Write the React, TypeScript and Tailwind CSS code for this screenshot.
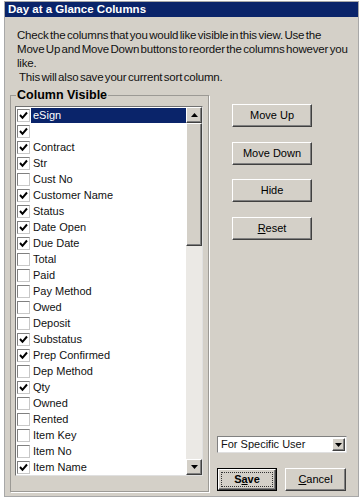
import React from "react";

const items: [string, boolean][] = [
  ["eSign", true],
  ["", true],
  ["Contract", true],
  ["Str", true],
  ["Cust No", false],
  ["Customer Name", true],
  ["Status", true],
  ["Date Open", true],
  ["Due Date", true],
  ["Total", false],
  ["Paid", false],
  ["Pay Method", false],
  ["Owed", false],
  ["Deposit", false],
  ["Substatus", true],
  ["Prep Confirmed", true],
  ["Dep Method", false],
  ["Qty", true],
  ["Owned", false],
  ["Rented", false],
  ["Item Key", false],
  ["Item No", false],
  ["Item Name", true],
];

const raised =
  "border border-t-white border-l-white border-r-[#404040] border-b-[#404040] shadow-[inset_-1px_-1px_0_#808080] bg-[#d4d0c8]";

function Tri({ up = false }: { up?: boolean }) {
  return (
    <svg width="7" height="4" viewBox="0 0 7 4">
      <polygon points={up ? "0,4 7,4 3.5,0" : "0,0 7,0 3.5,4"} fill="#000" />
    </svg>
  );
}

function Check({ on }: { on: boolean }) {
  return (
    <span className="w-[13px] h-[13px] shrink-0 bg-white border border-t-[#808080] border-l-[#808080] border-r-[#c8c8c8] border-b-[#c8c8c8] flex items-center justify-center">
      {on && (
        <svg width="11" height="11" viewBox="0 0 11 11">
          <polyline points="2,5 4.5,7.8 9,2.5" fill="none" stroke="#000" strokeWidth="2" />
        </svg>
      )}
    </span>
  );
}

function Btn({ children, top }: { children: React.ReactNode; top: string }) {
  return (
    <div className={`${raised} ${top} ml-[15px] w-[80px] h-[23px] flex items-center justify-center text-[11px] text-black`}>
      {children}
    </div>
  );
}

export default function App() {
  return (
    <div className="w-[362px] h-[504px] bg-white pl-[4px] pt-[1px] font-['Liberation_Sans',Arial,sans-serif]">
      <div className="w-[355px] h-[496px] border border-[#a8a8a8] bg-[#d4d0c8] flex flex-col">
        <div className="h-[15px] bg-[#0a246a] text-white font-bold text-[11.5px] leading-[15px] pl-[3px]">
          Day at a Glance Columns
        </div>

        <p className="mt-[11px] pl-[12px] text-[11.5px] leading-[14px] text-[#111] tracking-[-0.2px] [word-spacing:-1.5px]">
          Check the columns that you would like visible in this view. Use the
          <br />
          Move Up and Move Down buttons to reorder the columns however you
          <br />
          like.
          <br />
          <span className="pl-[2px]">This will also save your current sort column.</span>
        </p>

        <div className="flex mt-[4px] ml-[5px]">
          <fieldset className="w-[199px] h-[404px] border border-[#9c9a95] shadow-[1px_1px_0_#fff] px-[4px] pb-[14px]">
            <legend className="ml-[1px] px-[1px] font-bold text-[12.5px] leading-[14px] text-black">
              Column Visible
            </legend>
            <div className="mt-[4px] w-[188px] h-[370px] border border-t-[#707070] border-l-[#707070] border-r-[#e0e0e0] border-b-[#e0e0e0] bg-white flex">
              <div className="flex-1 flex flex-col">
                {items.map(([label, on], i) => (
                  <div key={i} className="h-[16px] flex items-center pl-[1px]">
                    <Check on={on} />
                    <span
                      className={`ml-[1px] flex-1 h-[15px] pl-[2px] text-[11px] leading-[15px] ${
                        i === 0 ? "bg-[#0a246a] text-white" : "text-[#111]"
                      }`}
                    >
                      {label}
                    </span>
                  </div>
                ))}
              </div>
              <div className="w-[16px] flex flex-col bg-[#ebe9e5]">
                <div className={`${raised} h-[16px] flex items-center justify-center`}>
                  <Tri up />
                </div>
                <div className={`${raised} h-[123px]`} />
                <div className="flex-1" />
                <div className={`${raised} h-[16px] flex items-center justify-center`}>
                  <Tri />
                </div>
              </div>
            </div>
          </fieldset>

          <div className="ml-[8px] w-[131px] h-[404px] flex flex-col pb-[1px]">
            <Btn top="mt-[16px]">Move Up</Btn>
            <Btn top="mt-[15px]">Move Down</Btn>
            <Btn top="mt-[14px]">Hide</Btn>
            <Btn top="mt-[15px]">
              <span>
                <span className="underline">R</span>eset
              </span>
            </Btn>

            <div className="mt-auto h-[17px] w-[130px] bg-white border border-t-[#808080] border-l-[#808080] border-r-[#e0e0e0] border-b-[#e0e0e0] flex items-center">
              <span className="flex-1 pl-[3px] text-[11px] leading-[15px] text-[#111]">For Specific User</span>
              <div className={`${raised} w-[13px] h-[13px] mr-[1px] flex items-center justify-center`}>
                <Tri />
              </div>
            </div>

            <div className="mt-[15px] flex gap-[8px]">
              <div className="w-[60px] h-[23px] border border-black">
                <div className={`${raised} w-full h-full flex items-center justify-center p-[2px]`}>
                  <div className="w-full h-full border border-dotted border-[#333] flex items-center justify-center text-[11px] font-bold text-black">
                    <span>
                      S<span className="underline">a</span>ve
                    </span>
                  </div>
                </div>
              </div>
              <div className={`${raised} w-[61px] h-[23px] flex items-center justify-center text-[11px] text-black`}>
                <span>
                  <span className="underline">C</span>ancel
                </span>
              </div>
            </div>
          </div>
        </div>
      </div>
    </div>
  );
}
